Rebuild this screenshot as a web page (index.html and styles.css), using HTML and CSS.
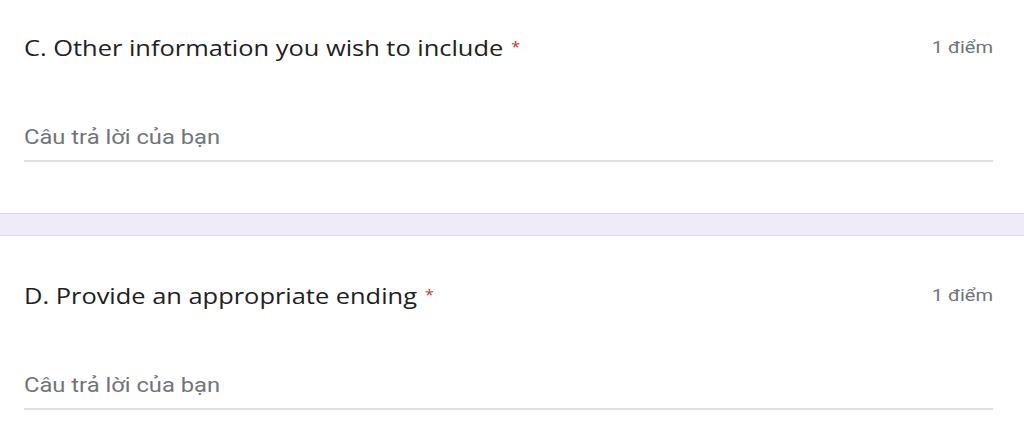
FILE: index.html
```html
<!DOCTYPE html>
<html lang="vi">
<head>
  <meta charset="UTF-8" />
  <meta name="viewport" content="width=device-width, initial-scale=1.0"/>
  <title>Biểu mẫu</title>
  <link rel="stylesheet" href="styles.css">
</head>
<body>

  <div class="form">
    <div class="card">
      <div class="question">
        <span class="title">C. Other information you wish to include<span class="req">*</span></span>
        <span class="points">1 điểm</span>
      </div>
      <div class="answer"><span class="hint">Câu trả lời của bạn</span></div>
    </div>

    <div class="card">
      <div class="question">
        <span class="title">D. Provide an appropriate ending<span class="req">*</span></span>
        <span class="points">1 điểm</span>
      </div>
      <div class="answer"><span class="hint">Câu trả lời của bạn</span></div>
    </div>
  </div>

</body>
</html>
```

FILE: styles.css
```css
body {
  margin: 0;
  background: #f0ebf8;
  font-family: Roboto, Arial, sans-serif;
  overflow: hidden;
}
.form {
  margin-top: -13px;
  display: flex;
  flex-direction: column;
  gap: 21px;
}
.card {
  background: #fff;
  border-top: 1px solid #dcd8e4;
  border-bottom: 1px solid #dcd8e4;
  padding: 43px 31px 51px 24px;
}
.question {
  display: flex;
  justify-content: space-between;
  align-items: center;
  height: 32px;
}
.title {
  display: inline-block;
  font-family: "Open Sans", Roboto, sans-serif;
  font-size: 22px;
  color: #202124;
  transform: scaleX(1.155);
  transform-origin: left center;
}
.req {
  color: #d93025;
  font-size: 14px;
  margin-left: 7px;
  vertical-align: 4px;
}
.points {
  display: inline-block;
  font-size: 17px;
  color: #70757a;
  transform: scaleX(1.18);
  transform-origin: right center;
}
.answer {
  margin-top: 58px;
  height: 33px;
  line-height: 33px;
  padding-bottom: 6px;
  border-bottom: 2px solid #e0e0e0;
}
.hint {
  display: inline-block;
  font-size: 21px;
  color: #70757a;
  transform: scaleX(1.13);
  transform-origin: left center;
}
```
